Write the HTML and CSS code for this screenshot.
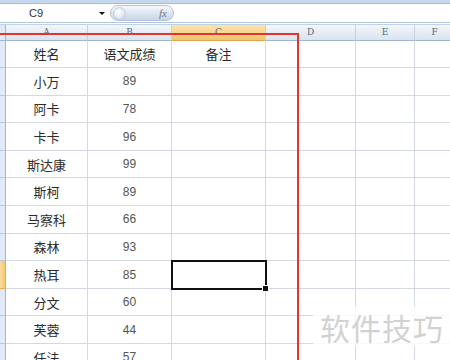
FILE: index.html
```html
<!DOCTYPE html>
<html lang="zh-CN">
<head>
    <meta charset="UTF-8">
    <meta name="viewport" content="width=device-width, initial-scale=1.0">
    <title>Sheet1</title>
    <link rel="stylesheet" href="styles.css">
</head>
<body>
    <div class="window">
        <div class="ribbon-edge"></div>
        <div class="formula-bar">
            <div class="name-box">
                <span class="cell-ref">C9</span>
                <span class="drop-arrow"></span>
            </div>
            <div class="fx-pill">
                <span class="fx-knob"></span>
                <span class="fx">fx</span>
            </div>
            <div class="formula-input"></div>
        </div>

        <div class="sheet" id="sheet">
            <div class="corner"></div>
            <div class="col-head">A</div>
            <div class="col-head">B</div>
            <div class="col-head selected">C</div>
            <div class="col-head">D</div>
            <div class="col-head">E</div>
            <div class="col-head">F</div>
            <!-- rows are filled in below -->
        </div>

        <div class="mark-box"></div>
        <div class="watermark">软件技巧</div>
    </div>

    <script>
        var rows = [
            ["姓名", "语文成绩", "备注"],
            ["小万", "89", ""],
            ["阿卡", "78", ""],
            ["卡卡", "96", ""],
            ["斯达康", "99", ""],
            ["斯柯", "89", ""],
            ["马察科", "66", ""],
            ["森林", "93", ""],
            ["热耳", "85", ""],
            ["分文", "60", ""],
            ["芙蓉", "44", ""],
            ["任法", "57", ""]
        ];

        var sheet = document.getElementById("sheet");

        rows.forEach(function(row, i) {
            var head = document.createElement("div");
            head.className = "row-head" + (i === 8 ? " selected" : "");
            sheet.appendChild(head);

            for (var c = 0; c < 6; c++) {
                var cell = document.createElement("div");
                cell.className = "cell";
                if (c === 0) cell.className += " name";
                if (c === 1 && i > 0) cell.className += " num";
                if (c === 2 && i === 8) cell.className += " active";
                cell.textContent = row[c] || "";
                sheet.appendChild(cell);
            }
        });
    </script>
</body>
</html>
```

FILE: styles.css
```css
body {
    margin: 0;
    padding: 0;
    background-color: #fff;
    font-family: "Liberation Sans", Arial, "Noto Sans CJK SC", sans-serif;
    overflow: hidden;
}

.window {
    position: relative;
    width: 450px;
    height: 360px;
    overflow: hidden;
    background-color: #fff;
}

.ribbon-edge {
    height: 3px;
    background-color: #c6d8ee;
    border-bottom: 1px solid #a7bcd8;
}

.formula-bar {
    display: flex;
    height: 18px;
    background-color: #fff;
    border-bottom: 1px solid #b4c6dd;
}

.name-box {
    display: flex;
    align-items: center;
    width: 110px;
    padding-left: 29px;
    box-sizing: border-box;
}

.cell-ref {
    font-size: 11px;
    color: #333;
    flex: 1;
}

.drop-arrow {
    width: 0;
    height: 0;
    margin-right: 5px;
    border-left: 3px solid transparent;
    border-right: 3px solid transparent;
    border-top: 3px solid #111;
}

.fx-pill {
    display: flex;
    align-items: center;
    justify-content: space-between;
    width: 64px;
    height: 16px;
    margin-top: 1px;
    padding: 0 6px 0 2px;
    box-sizing: border-box;
    border-radius: 8px;
    background: linear-gradient(to bottom, #f7f9fc, #dbe4ef 55%, #c9d5e4);
    border: 1px solid #b5c4d8;
}

.fx-knob {
    width: 11px;
    height: 11px;
    border-radius: 50%;
    background: radial-gradient(circle at 40% 35%, #ffffff, #dfe7f1 60%, #b9c8da);
    border: 1px solid #c3cfdf;
}

.fx {
    font-family: "Liberation Serif", serif;
    font-style: italic;
    font-size: 11px;
    color: #6d7785;
}

.formula-input {
    flex: 1;
    margin-left: 3px;
    background-color: #fff;
}

.sheet {
    display: grid;
    grid-template-columns: 6px 82px 84px 94px 90px 59px 40px;
    grid-template-rows: 15.5px;
    grid-auto-rows: 27.6px;
    margin-top: 1px;
    border-top: 1px solid #c2d2e6;
    background-color: #e9eff7;
}

.corner {
    background-color: #dfe8f3;
    border-right: 1px solid #9eb6ce;
    border-bottom: 1px solid #9eb6ce;
}

.col-head {
    display: flex;
    align-items: center;
    justify-content: center;
    font-family: "DejaVu Serif", serif;
    font-size: 9px;
    color: #5b6a7c;
    background: linear-gradient(to bottom, #f4f7fb, #e3eaf3 60%, #dae3ee);
    border-right: 1px solid #c5d2e2;
    border-bottom: 1px solid #9eb6ce;
    box-sizing: border-box;
}

.col-head.selected {
    background: linear-gradient(to bottom, #fbe3ad, #f8d58c 55%, #f2c46a);
    border-bottom-color: #e0a94a;
}

.row-head {
    background-color: #e1eaf6;
    border-right: 1px solid #9eb6ce;
    border-bottom: 1px solid #b7c8dc;
}

.row-head.selected {
    background: linear-gradient(to right, #fbdca0, #f6c66e);
    border-bottom-color: #e2ac55;
}

.cell {
    display: flex;
    align-items: center;
    justify-content: center;
    background-color: #fff;
    border-right: 1px solid #d3d8e1;
    border-bottom: 1px solid #d3d8e1;
    font-family: "Noto Sans CJK SC", "Liberation Sans", sans-serif;
    font-size: 13px;
    color: #2b2b2b;
    box-sizing: border-box;
}

.cell.num {
    font-family: "Liberation Sans", Arial, sans-serif;
    font-size: 12px;
    color: #555;
}

.cell.active {
    position: relative;
    outline: 2px solid #111;
    outline-offset: -1px;
}

.cell.active::after {
    content: "";
    position: absolute;
    right: -4px;
    bottom: -4px;
    width: 5px;
    height: 5px;
    background-color: #111;
    border: 1px solid #fff;
}

/* the red frame drawn over columns A:C */
.window::after {
    content: "";
    position: absolute;
    left: -10px;
    top: 33px;
    width: 305px;
    height: 400px;
    border: 2px solid #e2352e;
    pointer-events: none;
}

.mark-box {
    position: absolute;
    left: 313px;
    top: 306px;
    width: 137px;
    height: 40px;
    background-color: rgba(255, 255, 255, 0.85);
}

.watermark {
    position: absolute;
    left: 320px;
    top: 307px;
    font-family: "Noto Sans CJK SC", sans-serif;
    font-size: 30px;
    line-height: 40px;
    letter-spacing: 1px;
    color: #d2d2d2;
}
```
